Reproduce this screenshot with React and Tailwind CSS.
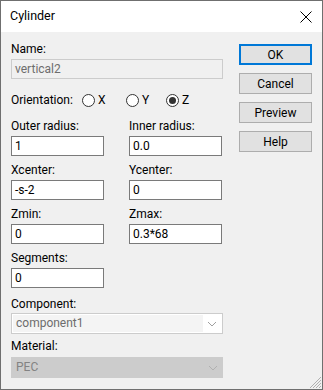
import React from 'react';

const font = { fontFamily: 'Roboto, "Noto Sans", sans-serif' };

const Label = ({ children, className = '' }) => (
  <div className={`h-[16px] leading-[16px] text-[12px] text-black ${className}`}>{children}</div>
);

const TextBox = ({ value, className = '' }) => (
  <div className={`h-[20px] border border-[#7a7a7a] bg-white px-[3px] text-[12px] leading-[18px] text-black ${className}`}>
    {value}
  </div>
);

const Field = ({ label, value, className = '' }) => (
  <div className={`flex flex-col gap-[2px] ${className}`}>
    <Label>{label}</Label>
    <TextBox value={value} />
  </div>
);

const Radio = ({ label, checked }) => (
  <div className="flex items-center gap-[3px]">
    <div className="w-[13px] h-[13px] rounded-full border border-[#333333] bg-white flex items-center justify-center">
      {checked && <div className="w-[7px] h-[7px] rounded-full bg-[#333333]" />}
    </div>
    <span className="text-[12px] leading-[16px]">{label}</span>
  </div>
);

const Chevron = ({ color }) => (
  <svg width="10" height="6" viewBox="0 0 10 6">
    <path d="M1 1 L5 5 L9 1" fill="none" stroke={color} strokeWidth="1" />
  </svg>
);

const Button = ({ children, primary }) => (
  <div
    className={`h-[21px] w-[73px] flex items-center justify-center text-[12px] bg-[#e1e1e1] ${
      primary ? 'border-2 border-[#0078d7]' : 'border border-[#adadad]'
    }`}
  >
    {children}
  </div>
);

export default function App() {
  return (
    <div style={font} className="w-[323px] h-[390px] border border-[#6f6f6f] flex flex-col bg-[#f0f0f0] overflow-hidden">
      {/* title bar */}
      <div className="h-[31px] bg-white flex items-center justify-between pl-[9px] pr-[10px] shrink-0">
        <span className="text-[12.5px] text-black">Cylinder</span>
        <svg width="12" height="12" viewBox="0 0 12 12">
          <path d="M0.5 0.5 L11.5 11.5 M11.5 0.5 L0.5 11.5" stroke="#000" strokeWidth="1" />
        </svg>
      </div>

      <div className="relative flex-1 flex pl-[10px] pt-[9px]">
        {/* left column */}
        <div className="w-[212px] flex flex-col">
          <Label>Name:</Label>
          <div className="mt-[2px] h-[20px] border border-[#cccccc] bg-[#f0f0f0] px-[3px] text-[12px] leading-[18px] text-[#6d6d6d]">
            vertical2
          </div>

          <div className="mt-[13px] flex items-center h-[16px]">
            <span className="text-[12px] leading-[16px] w-[71px] shrink-0">Orientation:</span>
            <div className="w-[44px] shrink-0"><Radio label="X" /></div>
            <div className="w-[40px] shrink-0"><Radio label="Y" /></div>
            <Radio label="Z" checked />
          </div>

          <div className="mt-[10px] grid grid-cols-[93px_93px] gap-x-[25px] gap-y-[6px]">
            <Field label="Outer radius:" value="1" />
            <Field label="Inner radius:" value="0.0" />
            <Field label="Xcenter:" value="-s-2" />
            <Field label="Ycenter:" value="0" />
            <Field label="Zmin:" value="0" />
            <Field label="Zmax:" value="0.3*68" />
            <Field label="Segments:" value="0" />
          </div>

          <Label className="mt-[8px]">Component:</Label>
          <div className="mt-[1px] h-[21px] border border-[#cccccc] bg-white flex items-center p-[1px]">
            <div className="flex-1 h-full bg-[#f4f4f4] px-[3px] text-[12px] leading-[17px] text-[#6d6d6d]">component1</div>
            <div className="w-[18px] flex justify-center"><Chevron color="#a0a0a0" /></div>
          </div>

          <Label className="mt-[4px]">Material:</Label>
          <div className="mt-[3px] h-[21px] border border-[#cccccc] bg-[#cccccc] flex items-center">
            <div className="flex-1 px-[4px] text-[12px] leading-[19px] text-[#838383]">PEC</div>
            <div className="w-[18px] flex justify-center"><Chevron color="#b0b0b0" /></div>
          </div>
        </div>

        {/* right column */}
        <div className="ml-[16px] pt-[3px] flex flex-col gap-[8px]">
          <Button primary>OK</Button>
          <Button>Cancel</Button>
          <Button>Preview</Button>
          <Button>Help</Button>
        </div>

        {/* resize grip */}
        <svg className="absolute right-0 bottom-0" width="12" height="12" viewBox="0 0 12 12">
          <path d="M11 3 L3 11 M11 6 L6 11 M11 9 L9 11 M11 0 L0 11" stroke="#b0b0b0" strokeWidth="1" />
        </svg>
      </div>
    </div>
  );
}
